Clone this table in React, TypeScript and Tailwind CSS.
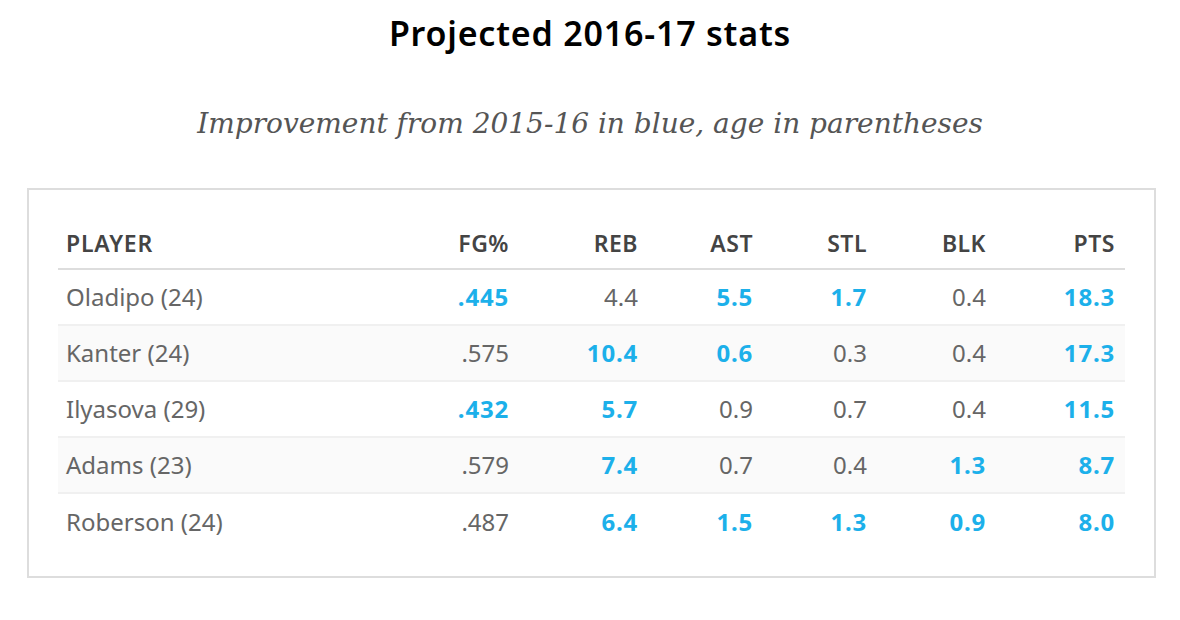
const rows: { name: string; vals: [string, boolean][] }[] = [
  { name: 'Oladipo (24)', vals: [['.445', true], ['4.4', false], ['5.5', true], ['1.7', true], ['0.4', false], ['18.3', true]] },
  { name: 'Kanter (24)', vals: [['.575', false], ['10.4', true], ['0.6', true], ['0.3', false], ['0.4', false], ['17.3', true]] },
  { name: 'Ilyasova (29)', vals: [['.432', true], ['5.7', true], ['0.9', false], ['0.7', false], ['0.4', false], ['11.5', true]] },
  { name: 'Adams (23)', vals: [['.579', false], ['7.4', true], ['0.7', false], ['0.4', false], ['1.3', true], ['8.7', true]] },
  { name: 'Roberson (24)', vals: [['.487', false], ['6.4', true], ['1.5', true], ['1.3', true], ['0.9', true], ['8.0', true]] },
]

const heads = ['FG%', 'REB', 'AST', 'STL', 'BLK', 'PTS']
const widths = ['w-[118px]', 'w-[129px]', 'w-[115px]', 'w-[114px]', 'w-[119px]', 'w-[129px]']

export default function App() {
  return (
    <div className="w-[1180px] h-[620px] bg-white font-['Noto_Sans',sans-serif]">
      <h1 className="pt-[11px] text-center text-[34px] leading-[44px] font-semibold text-black tracking-[0.8px]">
        Projected 2016-17 stats
      </h1>
      <p className="mt-[49px] text-center font-['DejaVu_Serif',serif] italic text-[28px] leading-[40px] text-[#555]">
        Improvement from 2015-16 in blue, age in parentheses
      </p>
      <div className="mt-[44px] ml-[27px] w-[1129px] border-2 border-[#ddd] px-[29px] pt-[28px] pb-[27px]">
        <table className="w-[1067px] table-fixed border-collapse">
          <thead>
            <tr className="h-[51px] border-b-2 border-[#ddd]">
              <th className="w-[343px] pl-[8px] text-left text-[23px] font-semibold tracking-[0.8px] text-[#444]">PLAYER</th>
              {heads.map((h, i) => (
                <th key={h} className={`${widths[i]} pr-[10px] text-right text-[23px] font-semibold tracking-[0.5px] text-[#444]`}>
                  {h}
                </th>
              ))}
            </tr>
          </thead>
          <tbody>
            {rows.map((r, ri) => (
              <tr
                key={r.name}
                className={`h-[56px] ${ri < rows.length - 1 ? 'border-b-2 border-[#f0f0f0]' : ''} ${ri % 2 === 1 ? 'bg-[#fafafa]' : 'bg-white'}`}
              >
                <td className="pl-[8px] text-left text-[24px] text-[#666]">{r.name}</td>
                {r.vals.map(([v, hi], i) => (
                  <td
                    key={i}
                    className={`pr-[10px] text-right text-[24px] ${hi ? 'font-bold tracking-[0.8px] text-[#1cb0ea]' : 'text-[#666]'}`}
                  >
                    {v}
                  </td>
                ))}
              </tr>
            ))}
          </tbody>
        </table>
      </div>
    </div>
  )
}
